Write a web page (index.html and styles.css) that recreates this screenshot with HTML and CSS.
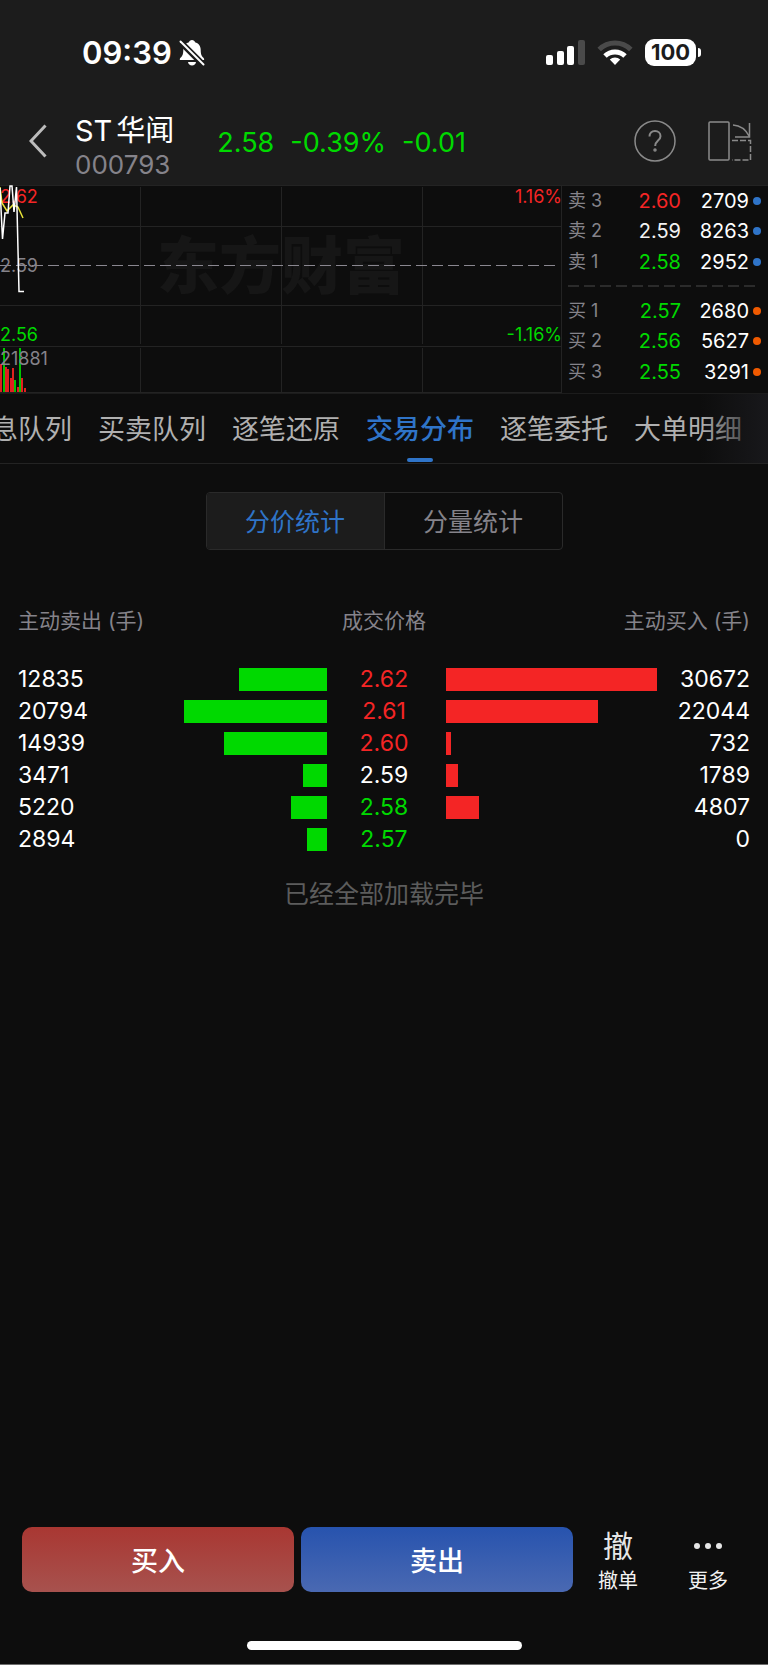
FILE: index.html
```
<!DOCTYPE html>
<html lang="zh-CN">
	<head>
		<meta charset="UTF-8" />
		<meta name="viewport" content="width=device-width, initial-scale=1.0" />
		<title>ST华闻 000793</title>
		<link rel="stylesheet" href="styles.css">
	</head>
	<body>
		<div class="page">
			<div class="statusBar">
				<div class="statusLeft">
					<span class="time">09:39</span>
					<svg width="26" height="28" viewBox="0 0 26 28">
						<path d="M13 1c1.600 0 2.700 1 3 2.200 3.600 1 5.700 3.800 5.700 7.500 0 4.500.8 6 2.500 7.800.9 1 1 1.300.9 2.500H.9c-.2-1.200 0-1.600.9-2.500 1.700-1.800 2.500-3.300 2.500-7.800 0-3.700 2.100-6.500 5.700-7.500C10.300 2 11.400 1 13 1z" fill="#fff" />
						<path d="M9 23h8c-.3 2.200-1.900 3.600-4 3.600S9.300 25.200 9 23z" fill="#fff" />
						<path d="M0 1.500l25 25" stroke="#1c1c1c" stroke-width="6" />
						<path d="M1.500 2.500l23 23" stroke="#fff" stroke-width="2" stroke-linecap="round" />
					</svg>
				</div>
				<div class="statusRight">
					<svg width="40" height="26" viewBox="0 0 40 26">
						<rect x="1" y="15" width="7" height="10" rx="2" fill="#fff" />
						<rect x="12" y="11" width="7" height="14" rx="2" fill="#fff" />
						<rect x="22" y="6" width="7" height="19" rx="2" fill="#fff" />
						<rect x="33" y="0" width="7" height="25" rx="2" fill="#4a4a4a" />
					</svg>
					<svg width="36" height="26" viewBox="0 0 36 26">
						<path d="M2.200 9.500a22.500 22.500 0 0 1 31.600 0" fill="none" stroke="#4a4a4a" stroke-width="5" />
						<path d="M8 16a14.500 14.500 0 0 1 20 0" fill="none" stroke="#fff" stroke-width="5" />
						<path d="M18 25l-5.200-5.400a7.500 7.500 0 0 1 10.400 0z" fill="#fff" />
					</svg>
					<div class="battery">100</div>
				</div>
			</div>

			<header class="header">
				<button class="iconBtn" aria-label="返回">
					<svg width="18" height="34" viewBox="0 0 18 34">
						<path d="M16.500 1.500L2 17l14.500 15.500" fill="none" stroke="#bcbcbc" stroke-width="3" />
					</svg>
				</button>
				<div class="stock">
					<h1><span>ST</span><span>华闻</span></h1>
					<p>000793</p>
				</div>
				<div class="quote green">
					<span>2.58</span>
					<span>-0.39%</span>
					<span>-0.01</span>
				</div>
				<div class="headerActions">
					<button class="iconBtn" aria-label="帮助">
						<svg width="42" height="42" viewBox="0 0 42 42" fill="none" stroke="#8a8a8a">
							<circle cx="21" cy="21" r="20" stroke-width="1.500" />
							<path d="M15.500 16.500c0-3.400 2.300-5.500 5.500-5.500s5.500 2.100 5.500 5.200c0 4.400-5.300 4.500-5.300 9.800" stroke-width="2" />
							<circle cx="21" cy="30" r="1" stroke-width="1.500" />
						</svg>
					</button>
					<button class="iconBtn" aria-label="横屏">
						<svg width="44" height="40" viewBox="0 0 44 40" fill="none" stroke="#8a8a8a" stroke-width="1.500">
							<rect x="1" y="1" width="20" height="38" rx="1" />
							<path d="M25 4c7 .5 12.500 4 16 11M41.500 2v14H27" />
							<path d="M24 19.500h18.500V39H24" stroke-dasharray="6 2" />
						</svg>
					</button>
				</div>
			</header>

			<section class="market">
				<div class="chart">
					<div class="watermark">东方财富</div>
					<svg class="chartLines" viewBox="0 0 562 208" preserveAspectRatio="none">
						<g stroke="#232323" stroke-width="1">
							<path d="M0 .5h562M0 41.500h562M0 120.500h562M0 161.500h562M0 207.500h562" />
							<path d="M140.500 2v157M281.500 2v157M422.500 2v157M561.500 0v208" />
							<path d="M140.500 163v45M281.500 163v45M422.500 163v45" />
						</g>
						<path d="M0 80.500h558" stroke="#8a8790" stroke-width="1" stroke-dasharray="11 5" />
						<g fill="#e02020">
							<rect x="0" y="179" width="2" height="28" />
							<rect x="5" y="182" width="2" height="25" />
							<rect x="7" y="184" width="2" height="23" />
							<rect x="10" y="193" width="2" height="14" />
							<rect x="12" y="183" width="2" height="24" />
							<rect x="17" y="202" width="2" height="5" />
							<rect x="21" y="193" width="2" height="14" />
							<rect x="24" y="203" width="2" height="4" />
						</g>
						<g fill="#00c400">
							<rect x="3" y="163" width="2" height="44" />
							<rect x="14" y="195" width="2" height="12" />
							<rect x="19" y="163" width="2" height="44" />
						</g>
					</svg>
					<div class="chartLabels">
						<span class="red">2.62</span>
						<span class="red">1.16%</span>
						<span class="gray">2.59</span>
						<span></span>
						<span class="green">2.56</span>
						<span class="green">-1.16%</span>
						<span class="gray">21881</span>
					</div>
					<svg class="chartLines" viewBox="0 0 562 208" preserveAspectRatio="none" fill="none">
						<path d="M0 2l2 16 5 8 6-6 5 2 5 11" stroke="#e8e337" stroke-width="1.500" />
						<path d="M0 3l2.500 51L5 28h3l2-27h2l2 26 2.500-25L19 106.500h5" stroke="#fff" stroke-width="1.500" />
					</svg>
				</div>

				<table class="orderBook">
					<tbody>
						<tr><th scope="row">卖 3</th><td class="red">2.60</td><td>2709</td><td><i class="dot"></i></td></tr>
						<tr><th scope="row">卖 2</th><td>2.59</td><td>8263</td><td><i class="dot"></i></td></tr>
						<tr><th scope="row">卖 1</th><td class="green">2.58</td><td>2952</td><td><i class="dot"></i></td></tr>
					</tbody>
					<tbody>
						<tr class="divider"><td colspan="4"><div></div></td></tr>
					</tbody>
					<tbody class="bids">
						<tr><th scope="row">买 1</th><td class="green">2.57</td><td>2680</td><td><i class="dot"></i></td></tr>
						<tr><th scope="row">买 2</th><td class="green">2.56</td><td>5627</td><td><i class="dot"></i></td></tr>
						<tr><th scope="row">买 3</th><td class="green">2.55</td><td>3291</td><td><i class="dot"></i></td></tr>
					</tbody>
				</table>
			</section>

			<nav class="tabs">
				<a href="#">息队列</a>
				<a href="#">买卖队列</a>
				<a href="#">逐笔还原</a>
				<a href="#" class="active">交易分布</a>
				<a href="#">逐笔委托</a>
				<a href="#">大单明细</a>
			</nav>

			<main class="content">
				<div class="segment">
					<button class="active">分价统计</button>
					<button>分量统计</button>
				</div>

				<table class="stats">
					<colgroup>
						<col class="colSell">
						<col>
						<col class="colPrice">
						<col>
						<col class="colBuy">
					</colgroup>
					<thead>
						<tr>
							<th colspan="2">主动卖出 (手)</th>
							<th>成交价格</th>
							<th colspan="2">主动买入 (手)</th>
						</tr>
					</thead>
					<tbody>
						<tr>
							<td>12835</td>
							<td><div class="bar sell" style="width: 41.800%"></div></td>
							<td class="red">2.62</td>
							<td><div class="bar buy" style="width: 100%"></div></td>
							<td>30672</td>
						</tr>
						<tr>
							<td>20794</td>
							<td><div class="bar sell" style="width: 67.800%"></div></td>
							<td class="red">2.61</td>
							<td><div class="bar buy" style="width: 71.900%"></div></td>
							<td>22044</td>
						</tr>
						<tr>
							<td>14939</td>
							<td><div class="bar sell" style="width: 48.700%"></div></td>
							<td class="red">2.60</td>
							<td><div class="bar buy" style="width: 2.400%"></div></td>
							<td>732</td>
						</tr>
						<tr>
							<td>3471</td>
							<td><div class="bar sell" style="width: 11.300%"></div></td>
							<td>2.59</td>
							<td><div class="bar buy" style="width: 5.800%"></div></td>
							<td>1789</td>
						</tr>
						<tr>
							<td>5220</td>
							<td><div class="bar sell" style="width: 17%"></div></td>
							<td class="green">2.58</td>
							<td><div class="bar buy" style="width: 15.700%"></div></td>
							<td>4807</td>
						</tr>
						<tr>
							<td>2894</td>
							<td><div class="bar sell" style="width: 9.400%"></div></td>
							<td class="green">2.57</td>
							<td><div class="bar buy" style="width: 0%"></div></td>
							<td>0</td>
						</tr>
					</tbody>
				</table>
				<p class="loaded">已经全部加载完毕</p>
			</main>

			<footer class="footer">
				<div class="actions">
					<button class="trade tradeBuy">买入</button>
					<button class="trade tradeSell">卖出</button>
					<button class="action">
						<span class="actionIcon">撤</span>
						<span>撤单</span>
					</button>
					<button class="action">
						<span class="actionIcon">
							<svg width="28" height="6" viewBox="0 0 28 6" fill="#e6e6e6">
								<circle cx="3" cy="3" r="3" />
								<circle cx="14" cy="3" r="3" />
								<circle cx="25" cy="3" r="3" />
							</svg>
						</span>
						<span>更多</span>
					</button>
				</div>
				<div class="homeIndicator"></div>
			</footer>
		</div>
	</body>
</html>
```
FILE: styles.css
```
* {
	box-sizing: border-box;
	margin: 0;
	padding: 0;
}

body {
	background: #0d0d0d;
	color: #f2f2f2;
	font-family: Inter, "Noto Sans CJK SC", sans-serif;
}

button {
	border: none;
	background: none;
	color: inherit;
	font-family: inherit;
	cursor: pointer;
}

a {
	color: inherit;
	text-decoration: none;
}

svg {
	display: block;
}

.red {
	color: #f42525;
}

.green {
	color: #00d900;
}

.gray {
	color: #85838a;
}

.page {
	display: flex;
	flex-direction: column;
	min-height: 100vh;
	border-bottom: 1px solid #6e6e6e;
}

/* status bar */
.statusBar {
	display: flex;
	justify-content: space-between;
	align-items: center;
	height: 97px;
	padding: 8px 67px 0 82px;
	background: #1c1c1c;
}

.statusLeft,
.statusRight {
	display: flex;
	align-items: center;
}

.statusLeft {
	gap: 7px;
}

.statusRight {
	gap: 12px;
}

.time {
	color: #fff;
	font-size: 31px;
	font-weight: 600;
	line-height: 40px;
}

.battery {
	position: relative;
	width: 51px;
	height: 27px;
	margin-right: 5px;
	border-radius: 9px;
	background: #fff;
	color: #1c1c1c;
	font-size: 22px;
	font-weight: 700;
	line-height: 27px;
	text-align: center;
}

.battery::after {
	content: "";
	position: absolute;
	top: 9px;
	right: -5px;
	width: 3px;
	height: 9px;
	border-radius: 0 4px 4px 0;
	background: #fff;
}

/* stock header */
.header {
	display: flex;
	align-items: center;
	height: 88px;
	padding: 0 16px 0 29px;
	background: #1c1c1c;
}

.stock {
	padding-top: 12px;
	margin-left: 28px;
}

.stock h1 {
	display: flex;
	gap: 4px;
	color: #fff;
	font-size: 29px;
	font-weight: 400;
	line-height: 36px;
}

.stock p {
	color: #85838a;
	font-size: 26px;
	line-height: 32px;
}

.quote {
	display: flex;
	gap: 16px;
	margin-left: 43px;
	padding-top: 2px;
	font-size: 27px;
}

.headerActions {
	display: flex;
	align-items: center;
	gap: 32px;
	margin-left: auto;
}

/* chart and order book */
.market {
	display: flex;
	height: 208px;
}

.chart {
	position: relative;
	flex: 1;
}

.watermark {
	display: flex;
	justify-content: center;
	align-items: center;
	height: 154px;
	color: #161616;
	font-size: 62px;
	font-weight: 900;
}

.chartLines {
	position: absolute;
	top: 0;
	left: 0;
	width: 100%;
	height: 100%;
}

.chartLabels {
	position: absolute;
	top: 1px;
	left: 0;
	display: grid;
	grid-template-columns: 1fr 1fr;
	grid-template-rows: 46px 68px 46px 26px;
	align-items: center;
	width: 100%;
	font-size: 18px;
	line-height: 22px;
}

.chartLabels span:nth-child(-n + 2) {
	align-self: start;
}

.chartLabels span:nth-child(5),
.chartLabels span:nth-child(6) {
	align-self: end;
}

.chartLabels span:nth-child(even) {
	text-align: right;
}

.orderBook {
	width: 206px;
	height: 202px;
	border-collapse: collapse;
	border-top: 1px solid #232323;
	font-size: 20px;
	line-height: 24px;
	text-align: right;
}

.orderBook tr {
	height: 30px;
}

.orderBook th {
	padding-left: 6px;
	color: #85838a;
	font-size: 18px;
	font-weight: 400;
	text-align: left;
}

.orderBook td:nth-child(3) {
	width: 68px;
	color: #fff;
}

.orderBook td:last-child {
	width: 19px;
	padding-left: 4px;
}

.orderBook .divider {
	height: 18px;
}

.orderBook .divider td {
	padding: 0 10px 0 6px;
}

.divider div {
	height: 2px;
	background: repeating-linear-gradient(90deg, #2b2b2b 0 11px, transparent 11px 16px);
}

.dot {
	display: block;
	width: 8px;
	height: 8px;
	border-radius: 50%;
	background: #2f74c8;
}

.bids .dot {
	background: #f05a00;
}

/* tabs */
.tabs {
	position: relative;
	display: flex;
	gap: 26px;
	height: 71px;
	border-top: 1px solid #1c1c1c;
	border-bottom: 1px solid #232323;
	color: #b0b0b0;
	font-size: 27px;
	line-height: 72px;
	white-space: nowrap;
	overflow: hidden;
}

.tabs a:first-child {
	margin-left: -9px;
}

.tabs .active {
	position: relative;
	color: #2f74c8;
	font-weight: 500;
}

.tabs .active::after {
	content: "";
	position: absolute;
	bottom: 1px;
	left: 50%;
	width: 26px;
	height: 4px;
	margin-left: -13px;
	border-radius: 2px;
	background: #2f74c8;
}

.tabs::after {
	content: "";
	position: absolute;
	top: 0;
	right: 0;
	width: 68px;
	height: 100%;
	background: linear-gradient(90deg, rgba(24, 24, 27, 0), #18181b);
}

/* price distribution */
.content {
	flex: 1;
	padding: 28px 18px;
}

.segment {
	display: flex;
	width: 357px;
	margin: 0 auto;
	border: 1px solid #2a2a2a;
	border-radius: 4px;
	overflow: hidden;
}

.segment button {
	flex: 1;
	height: 56px;
	padding-bottom: 2px;
	color: #85838a;
	font-size: 25px;
}

.segment .active {
	border-right: 1px solid #2a2a2a;
	background: #1c1c1c;
	color: #2f74c8;
}

.stats {
	width: 100%;
	margin-top: 40px;
	border-collapse: collapse;
	table-layout: fixed;
	color: #fff;
	font-size: 23px;
	line-height: 28px;
}

.colSell {
	width: 98px;
}

.colPrice {
	width: 119px;
}

.colBuy {
	width: 93px;
}

.stats th {
	height: 73px;
	padding-bottom: 12px;
	color: #85838a;
	font-size: 21px;
	font-weight: 400;
}

.stats th:first-child {
	text-align: left;
}

.stats th:last-child,
.stats td:last-child {
	text-align: right;
}

.stats th:nth-child(2),
.stats td:nth-child(3) {
	padding-right: 5px;
	text-align: center;
}

.stats tbody tr {
	height: 32px;
}

.bar {
	height: 23px;
}

.sell {
	margin-left: auto;
	background: #00d900;
}

.buy {
	background: #f42525;
}

.loaded {
	margin-top: 19px;
	color: #5c5c5c;
	font-size: 25px;
	line-height: 40px;
	text-align: center;
}

/* bottom bar */
.actions {
	display: flex;
	padding: 0 15px 0 22px;
}

.trade {
	flex: 1;
	height: 65px;
	border-radius: 10px;
	color: #fff;
	font-size: 27px;
	font-weight: 500;
}

.tradeBuy {
	margin-right: 7px;
	background: linear-gradient(#a93732, #a7524e);
}

.tradeSell {
	background: linear-gradient(#2753ae, #4a69b2);
}

.action {
	display: flex;
	flex-direction: column;
	align-items: center;
	width: 90px;
	font-size: 20px;
	line-height: 32px;
}

.actionIcon {
	display: flex;
	align-items: center;
	height: 38px;
	color: #e6e6e6;
	font-size: 30px;
}

.homeIndicator {
	width: 275px;
	height: 9px;
	margin: 44px auto 14px;
	border-radius: 5px;
	background: #fff;
}
```
